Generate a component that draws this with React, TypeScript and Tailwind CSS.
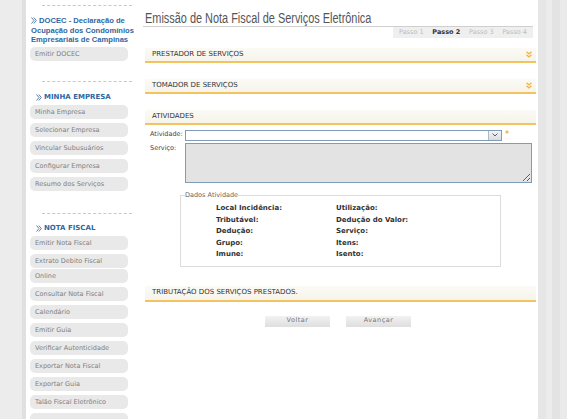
import React from "react";

const verdana = { fontFamily: '"DejaVu Sans", Verdana, sans-serif' };
const arial = { fontFamily: '"Liberation Sans", Arial, sans-serif' };

const Chevrons: React.FC = () => (
  <svg width="6" height="7" viewBox="0 0 6 7" className="inline-block shrink-0 align-[-0.5px]">
    <polyline points="0.5,0.5 3,3.5 0.5,6.5" fill="none" stroke="#5b7fa6" strokeWidth="1" />
    <polyline points="2.8,0.5 5.3,3.5 2.8,6.5" fill="none" stroke="#5b7fa6" strokeWidth="1" />
  </svg>
);

const DownArrows: React.FC = () => (
  <svg width="6" height="7" viewBox="0 0 6 7">
    <polyline points="0.5,0.8 3,3 5.5,0.8" fill="none" stroke="#f0b43c" strokeWidth="1.2" />
    <polyline points="0.5,3.8 3,6 5.5,3.8" fill="none" stroke="#f0b43c" strokeWidth="1.2" />
  </svg>
);

const Separator: React.FC<{ className?: string }> = ({ className }) => (
  <div className={"ml-[12px] w-[90px] border-t border-dashed border-[#c8c8c8] " + (className || "")} />
);

const Pill: React.FC<{ label?: string; className?: string }> = ({ label, className }) => (
  <div
    className={
      "h-[14px] w-[98px] shrink-0 rounded-[5px] bg-[#e9e9e9] pl-[5px] text-[6.5px] leading-[14px] text-[#808080] " +
      (className || "")
    }
  >
    {label}
  </div>
);

const Heading: React.FC<{ children: React.ReactNode; className?: string }> = ({ children, className }) => (
  <div className={"flex items-center gap-[2px] pl-[6px] text-[7px] font-bold leading-[9px] text-[#2f67a3] " + (className || "")}>
    <Chevrons />
    <span>{children}</span>
  </div>
);

const SectionBar: React.FC<{ title: string; arrow?: boolean; className?: string }> = ({ title, arrow, className }) => (
  <div
    className={
      "ml-[2px] flex h-[15px] items-center justify-between border-b-2 border-[#f2c35e] bg-[linear-gradient(#fbfaf5,#f6f4ea)] pl-[7px] pr-[4px] text-[7px] text-[#333] " +
      (className || "")
    }
  >
    <span>{title}</span>
    {arrow && <DownArrows />}
  </div>
);

const minha = ["Minha Empresa", "Selecionar Empresa", "Vincular Subusuários", "Configurar Empresa", "Resumo dos Serviços"];
const nota = [
  "Calendário",
  "Emitir Guia",
  "Verificar Autenticidade",
  "Exportar Nota Fiscal",
  "Exportar Guia",
  "Talão Fiscal Eletrônico",
];

const dados = [
  ["Local Incidência:", "Utilização:"],
  ["Tributável:", "Dedução do Valor:"],
  ["Dedução:", "Serviço:"],
  ["Grupo:", "Itens:"],
  ["Imune:", "Isento:"],
];

export default function App() {
  return (
    <div className="flex h-[419px] w-[567px] overflow-hidden bg-white" style={verdana}>
      {/* left edge */}
      <div className="w-[22px] shrink-0 bg-[#ececec]" />
      <div className="w-[4px] shrink-0 bg-[#e0e0e0]" />

      {/* sidebar */}
      <div className="flex h-[419px] w-[112px] shrink-0 flex-col overflow-hidden pl-[4px] pt-[5px]">
        <Separator />
        <div
          className="mt-[10px] whitespace-nowrap pl-[1px] text-[7.6px] font-bold leading-[9.5px] text-[#2f67a3]"
          style={arial}
        >
          <Chevrons /> DOCEC - Declaração de
          <br />
          Ocupação dos Condomínios
          <br />
          Empresariais de Campinas
        </div>
        <Pill label="Emitir DOCEC" className="mt-[2px]" />

        <Separator className="mt-[20px]" />
        <Heading className="mt-[11px]">MINHA EMPRESA</Heading>
        <div className="mt-[3px] flex flex-col gap-[4px]">
          {minha.map(m => (
            <Pill key={m} label={m} />
          ))}
        </div>

        <Separator className="mt-[22px]" />
        <Heading className="mt-[10px]">NOTA FISCAL</Heading>
        <div className="mt-[3px] flex flex-col">
          <Pill label="Emitir Nota Fiscal" />
          <Pill label="Extrato Debito Fiscal" className="mt-[4px]" />
          <Pill label="Online" className="mt-[1px]" />
          <div className="mt-[4px] flex flex-col gap-[4px]">
            <Pill label="Consultar Nota Fiscal" />
            {nota.map(n => (
              <Pill key={n} label={n} />
            ))}
            <Pill />
          </div>
        </div>
      </div>

      {/* main */}
      <div className="w-[400px] shrink-0 pl-[5px] pr-[2px]">
        <div className="mr-[3px] h-[27px] border-b border-[#cfcfcf] pl-[2px] pt-[6px]">
          <h1
            className="inline-block origin-left scale-x-[0.78] whitespace-nowrap text-[14px] leading-[14px] text-[#555]"
            style={arial}
          >
            Emissão de Nota Fiscal de Serviços Eletrônica
          </h1>
        </div>
        <div className="mr-[3px] flex justify-end">
          <div className="flex h-[11px] w-[140px] items-center justify-between bg-[#efefef] px-[6px] text-[6.5px] text-[#bdbdbd]">
            <span>Passo 1</span>
            <span className="font-bold text-[#333]">Passo 2</span>
            <span>Passo 3</span>
            <span>Passo 4</span>
          </div>
        </div>

        <SectionBar title="PRESTADOR DE SERVIÇOS" arrow className="mt-[10px]" />
        <SectionBar title="TOMADOR DE SERVIÇOS" arrow className="mt-[16px]" />
        <SectionBar title="ATIVIDADES" className="mt-[16px]" />

        <div className="mt-[4px] flex items-center text-[6.5px] text-[#444]">
          <span className="w-[42px] pl-[7px]">Atividade:</span>
          <div className="flex h-[11px] w-[317px] items-stretch justify-end border border-[#7f9db9] bg-white">
            <div className="flex w-[13px] items-center justify-center border-l border-[#a7bcd0] bg-[linear-gradient(#f4f4f4,#dcdcdc)]">
              <svg width="6" height="4" viewBox="0 0 6 4">
                <polyline points="0.5,0.5 3,3 5.5,0.5" fill="none" stroke="#4d6185" strokeWidth="1" />
              </svg>
            </div>
          </div>
          <span className="ml-[3px] text-[8px] text-[#e8912c]">*</span>
        </div>

        <div className="mt-[2px] flex text-[6.5px] text-[#444]">
          <span className="w-[42px] pl-[7px] pt-[1px]">Serviço:</span>
          <textarea
            readOnly
            className="h-[40px] w-[347px] border border-[#7f9db9] bg-[#e3e3e3] outline-none"
          />
        </div>

        <fieldset className="ml-[37px] mt-[8px] w-[321px] border border-[#dcdcdc] pb-[5px] pt-[4px]">
          <legend className="ml-[4px] text-[6.5px] leading-[8px] text-[#666]">Dados Atividade</legend>
          <div className="grid grid-cols-[120px_1fr] pl-[35px] text-[7px] font-bold leading-[11.5px] text-[#333]">
            {dados.map(([a, b]) => (
              <React.Fragment key={a}>
                <span>{a}</span>
                <span>{b}</span>
              </React.Fragment>
            ))}
          </div>
        </fieldset>

        <SectionBar title="TRIBUTAÇÃO DOS SERVIÇOS PRESTADOS." className="mt-[19px] h-[16px]" />

        <div className="mt-[14px] flex justify-center gap-[16px] pr-[3px] text-[6.5px] tracking-[0.5px] text-[#777]">
          <div className="flex h-[11px] w-[65px] items-center justify-center bg-[linear-gradient(#f2f2f2,#dedede)]">Voltar</div>
          <div className="flex h-[11px] w-[65px] items-center justify-center bg-[linear-gradient(#f2f2f2,#dedede)]">Avançar</div>
        </div>
      </div>

      {/* right edge */}
      <div className="w-[29px] shrink-0 bg-[linear-gradient(90deg,#e6e6e6_0px,#e6e6e6_8px,#ececec_8px,#ececec_14px,#e3e3e3_14px,#e3e3e3_22px,#eaeaea_22px)]" />
    </div>
  );
}
